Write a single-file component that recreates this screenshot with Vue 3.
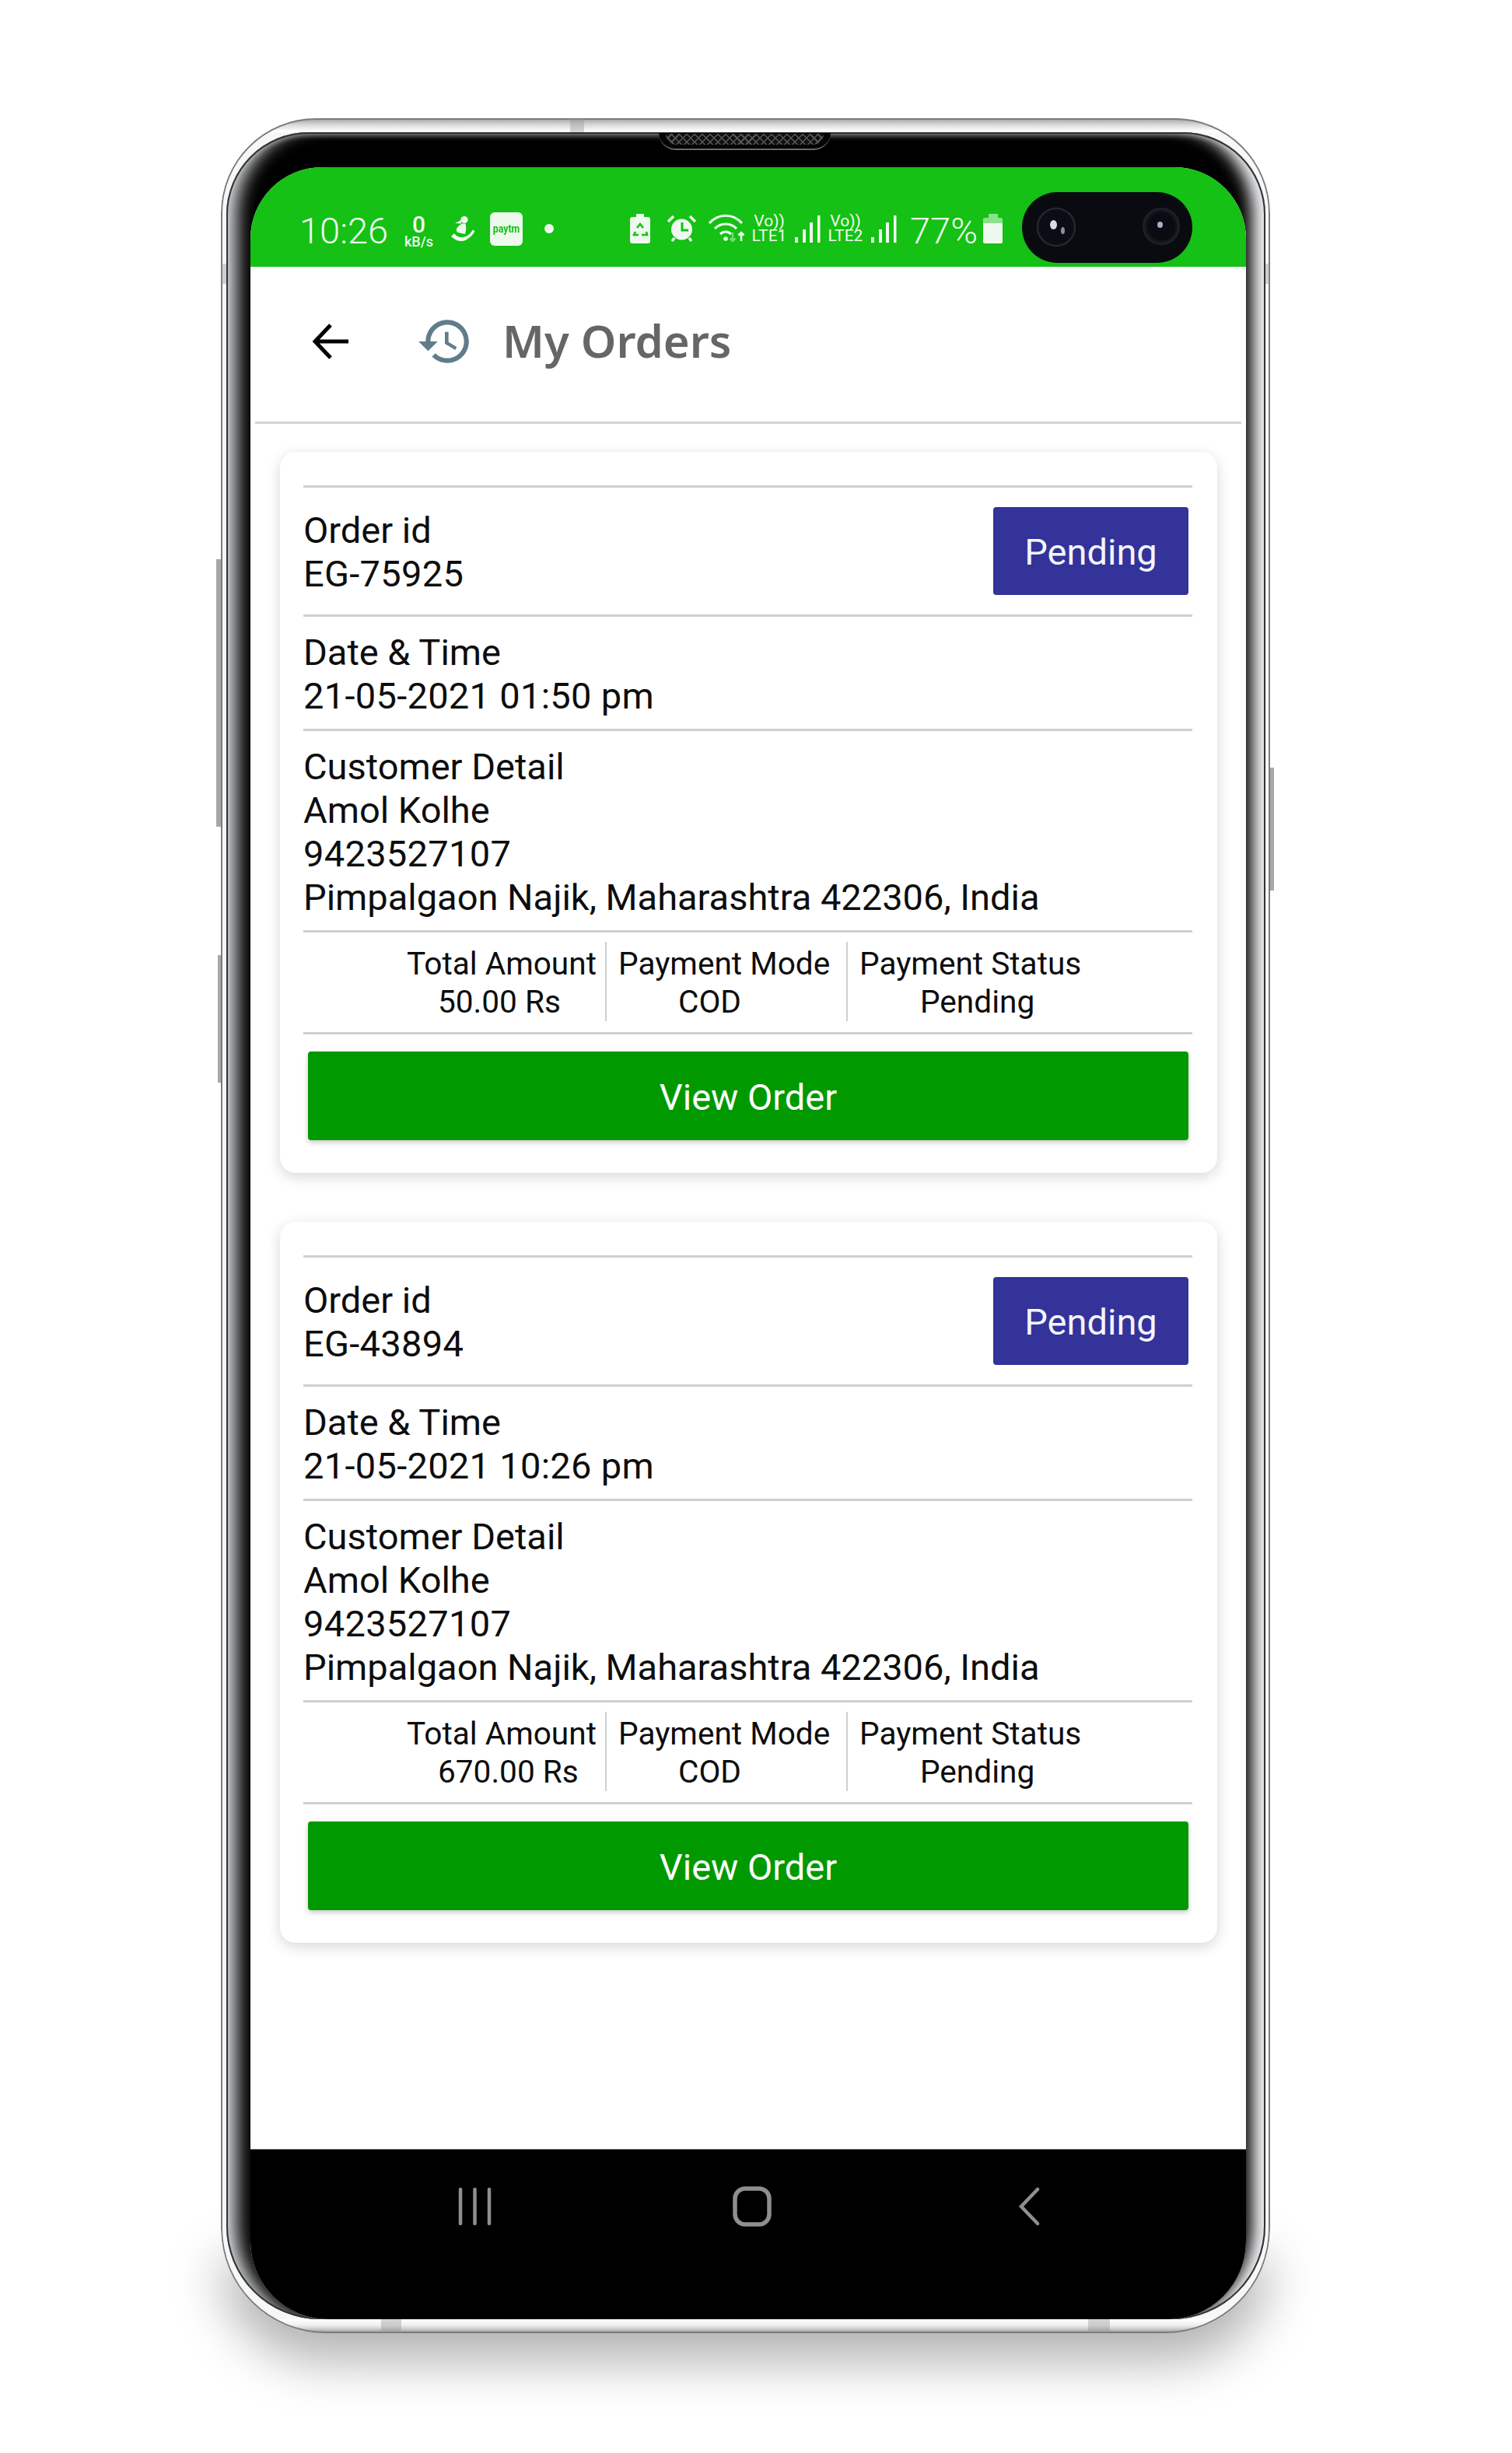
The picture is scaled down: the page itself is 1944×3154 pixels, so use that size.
<script setup>
const orders = [
  { id: 'EG-75925', date: '21-05-2021 01:50 pm', amount: '50.00 Rs' },
  { id: 'EG-43894', date: '21-05-2021 10:26 pm', amount: '670.00 Rs' }
]

const customer = {
  name: 'Amol Kolhe',
  phone: '9423527107',
  address: 'Pimpalgaon Najik, Maharashtra 422306, India'
}
</script>

<template>
  <div class="page">
    <div class="phone">
      <span class="floor-shadow"></span>
      <span class="side-key side-key--bixby"></span>
      <span class="side-key side-key--volume"></span>
      <span class="side-key side-key--power"></span>
      <span class="band band--top"></span>
      <span class="band band--left"></span>
      <span class="band band--right"></span>
      <span class="band band--bottom-a"></span>
      <span class="band band--bottom-b"></span>

      <div class="bezel">
        <div class="speaker"><span class="speaker__mesh"></span></div>

        <div class="screen">
          <div class="status">
            <span class="status__time">10:26</span>
            <span class="net">
              <span class="net__value">0</span>
              <span class="net__unit">kB/s</span>
            </span>
            <svg class="ic-figure" viewBox="0 0 31 35" fill="#eef9ee">
              <circle cx="17" cy="5.5" r="4.6" />
              <path d="M13 6 5 10l8 .6z" />
              <path d="M14 10.500C8 14 4 19 9 22l9 2c1.500-5 1.500-10 .5-13.500z" />
              <path d="M0 27c6 6 14 8 20 4 5-3 8-6 10.500-11l-3-1.500c-2 5-7 9-13 9.500-4 .5-8-1-10.500-5z" />
            </svg>
            <span class="paytm"><span class="paytm__word">paytm</span></span>
            <span class="status__dot"></span>

            <svg class="ic-battery-saver" viewBox="0 0 26 38">
              <path fill="#eef9ee" d="M8 0h10v4h5a3 3 0 0 1 3 3v28a3 3 0 0 1-3 3H3a3 3 0 0 1-3-3V7a3 3 0 0 1 3-3h5z" />
              <path fill="none" stroke="#14c114" stroke-width="2.600" d="M9 18l4-5 4 5M7 23l-2 4h6M21 23l1 4h-7" />
            </svg>
            <svg class="ic-alarm" viewBox="0 0 39 36">
              <circle cx="19.500" cy="19" r="13.500" fill="#eef9ee" />
              <path fill="none" stroke="#14c114" stroke-width="3" d="M20 10v10h8" />
              <path fill="none" stroke="#eef9ee" stroke-width="3.500" d="M2 9l7-7M37 9l-7-7M7 34l3-4M32 34l-3-4" />
            </svg>
            <svg class="ic-wifi" viewBox="0 0 50 38">
              <g fill="none" stroke="#eef9ee" stroke-width="3.200">
                <path d="M2 13c12-13 30-13 42 0" />
                <path d="M9 20c8-8 20-8 28 0" />
                <path d="M16 27c4-4 10-4 14 0" />
              </g>
              <circle cx="23" cy="33" r="2.800" fill="#eef9ee" />
              <path fill="none" stroke="#72dc72" stroke-width="2.600" d="M32 25v11M28.500 32.500 32 36l3.500-3.500" />
              <path fill="none" stroke="#eef9ee" stroke-width="2.600" d="M43 36V25M39.500 28.500 43 25l3.500 3.500" />
            </svg>

            <span class="volte volte--one"><span>Vo))</span><span>LTE1</span></span>
            <svg class="ic-bars" viewBox="0 0 33 36" fill="#eef9ee">
              <rect x="0" y="28" width="4" height="7" />
              <rect x="10" y="18" width="4" height="17" />
              <rect x="19" y="9" width="4" height="26" />
              <rect x="29" y="0" width="3.500" height="35" />
            </svg>
            <span class="volte volte--two"><span>Vo))</span><span>LTE2</span></span>
            <svg class="ic-bars ic-bars--two" viewBox="0 0 33 36" fill="#eef9ee">
              <rect x="0" y="28" width="4" height="7" />
              <rect x="10" y="18" width="4" height="17" />
              <rect x="19" y="9" width="4" height="26" />
              <rect x="29" y="0" width="3.500" height="35" />
            </svg>
            <span class="status__battery-text">77%</span>
            <span class="battery"><span class="battery__cap"></span><span class="battery__body"></span></span>
          </div>

          <div class="camera">
            <span class="lens lens--main"><i class="glint glint--a"></i><i class="glint glint--b"></i></span>
            <span class="lens lens--second"><i class="glint glint--c"></i></span>
          </div>

          <header class="title-bar">
            <svg class="ic-back" viewBox="0 0 46 46" fill="none" stroke="#000" stroke-width="5">
              <path d="M46 23H4M23 2 3 23l20 21" />
            </svg>
            <svg class="ic-history" viewBox="0 0 24 24" fill="#607d8b">
              <path d="M13 3c-4.970 0-9 4.030-9 9H1l3.890 3.890.07.140L9 12H6c0-3.870 3.130-7 7-7s7 3.130 7 7-3.130 7-7 7c-1.930 0-3.680-.790-4.940-2.060l-1.420 1.420C8.270 19.990 10.510 21 13 21c4.970 0 9-4.030 9-9s-4.030-9-9-9zm-1 5v5l4.280 2.540.720-1.210-3.500-2.080V8H12z" />
            </svg>
            <h1 class="title">My Orders</h1>
          </header>

          <main class="orders">
            <article v-for="order in orders" :key="order.id" class="card">
              <section class="row row--id">
                <div>
                  <p>Order id</p>
                  <p class="digits">{{ order.id }}</p>
                </div>
                <button type="button" class="pending">Pending</button>
              </section>
              <section class="row row--date">
                <p>Date &amp; Time</p>
                <p class="digits">{{ order.date }}</p>
              </section>
              <section class="row row--customer">
                <p>Customer Detail</p>
                <p>{{ customer.name }}</p>
                <p class="digits">{{ customer.phone }}</p>
                <p>{{ customer.address }}</p>
              </section>
              <section class="summary">
                <div class="cell cell--amount">
                  <p>Total Amount</p>
                  <p class="cell__value cell__value--amount">{{ order.amount }}</p>
                </div>
                <div class="cell cell--mode">
                  <p>Payment Mode</p>
                  <p class="cell__value cell__value--mode">COD</p>
                </div>
                <div class="cell cell--status">
                  <p>Payment Status</p>
                  <p class="cell__value cell__value--status">Pending</p>
                </div>
              </section>
              <button type="button" class="view">View Order</button>
            </article>
          </main>

          <footer class="nav">
            <svg class="ic-recents" viewBox="0 0 43 50" fill="none" stroke="#8f8f8f" stroke-width="4.500" stroke-linecap="round">
              <path d="M3 3v44M21.500 3v44M40 3v44" />
            </svg>
            <svg class="ic-home" viewBox="0 0 50 52" fill="none" stroke="#8f8f8f" stroke-width="5.500">
              <rect x="3" y="3" width="44" height="46" rx="13" />
            </svg>
            <svg class="ic-navback" viewBox="0 0 28 50" fill="none" stroke="#8f8f8f" stroke-width="4.500" stroke-linecap="round">
              <path d="M25 3 4 25l21 22" />
            </svg>
          </footer>
        </div>
      </div>
    </div>
  </div>
</template>

<style>
html,
body {
  margin: 0;
  background: #fff;
}
</style>

<style scoped>
.page {
  width: 1944px;
  height: 3154px;
  padding: 152px 0 0 284px;
  box-sizing: border-box;
  overflow: hidden;
  isolation: isolate;
  background: #fff;
  font-family: Roboto, "Liberation Sans", sans-serif;
  color: #0d0d0d;
}

p {
  margin: 0;
}

.phone {
  position: relative;
  width: 1349px;
  height: 2848px;
  box-sizing: border-box;
  padding: 18px 6px 18px 7px;
  border-radius: 122px 122px 135px 135px;
  background:
    linear-gradient(180deg, #8c8c8c 0, #b5b5b5 3px, #dcdcdc 9px, #fff 17px, #fff 18px) top / 100% 18px no-repeat,
    linear-gradient(180deg, #fff 0, #eee 8px, #c8c8c8 13px, #8d8d8d 18px) bottom / 100% 18px no-repeat,
    #f6f7f8;
  box-shadow: inset 0 0 0 2px #7c7c7c;
}

.floor-shadow {
  position: absolute;
  left: 0;
  right: 0;
  bottom: -36px;
  height: 130px;
  border-radius: 0 0 140px 140px;
  background: rgba(0, 0, 0, 0.3);
  filter: blur(32px);
  z-index: -1;
}

.side-key {
  position: absolute;
  background: #a8a8a8;
  z-index: -1;
}

.side-key--bixby {
  left: -6px;
  top: 567px;
  width: 8px;
  height: 344px;
}

.side-key--volume {
  left: -4px;
  top: 1076px;
  width: 6px;
  height: 164px;
}

.side-key--power {
  right: -5px;
  top: 835px;
  width: 7px;
  height: 158px;
}

.band {
  position: absolute;
  background: rgba(150, 150, 150, 0.4);
}

.band--top {
  left: 449px;
  top: 1px;
  width: 18px;
  height: 17px;
}

.band--left {
  left: 1px;
  top: 187px;
  width: 6px;
  height: 26px;
}

.band--right {
  right: 1px;
  top: 187px;
  width: 5px;
  height: 26px;
}

.band--bottom-a {
  left: 206px;
  bottom: 1px;
  width: 26px;
  height: 17px;
}

.band--bottom-b {
  left: 1115px;
  bottom: 1px;
  width: 28px;
  height: 17px;
}

.bezel {
  position: relative;
  height: 2812px;
  box-sizing: border-box;
  padding: 45px 25px 0 31px;
  border-radius: 106px 106px 120px 120px;
  background: #000;
  box-shadow:
    inset 0 0 0 2px #333,
    inset 27px 0 24px -15px #eceef0,
    inset -27px 0 20px -10px #f2f3f5,
    inset 0 7px 6px -3px #6a6a6a;
}

.speaker {
  position: absolute;
  left: 556px;
  top: 1px;
  width: 221px;
  height: 22px;
  box-sizing: border-box;
  padding: 1px 9px 5px;
  border-radius: 0 0 40px 40px;
  border-bottom: 2px solid #6a6a6a;
  background: #050505;
}

.speaker__mesh {
  display: block;
  height: 100%;
  border-radius: 0 0 30px 30px;
  background:
    repeating-linear-gradient(45deg, #555 0 1.500px, transparent 1.500px 7px),
    repeating-linear-gradient(-45deg, #555 0 1.500px, transparent 1.500px 7px),
    #111;
}

.screen {
  position: relative;
  width: 1280px;
  height: 2767px;
  display: flex;
  flex-direction: column;
  border-radius: 92px 92px 100px 100px;
  overflow: hidden;
  background: #fff;
}

.status {
  height: 128px;
  flex: none;
  display: flex;
  align-items: flex-start;
  padding-left: 63px;
  background: #14c114;
  color: #eef9ee;
}

.status__time,
.status__battery-text {
  margin-top: 54px;
  font-size: 47px;
  font-weight: 300;
  line-height: 55px;
  white-space: nowrap;
}

.status__time {
  width: 114px;
}

.net {
  width: 39px;
  margin: 60px 0 0 20px;
  display: flex;
  flex-direction: column;
  align-items: center;
  font-weight: 500;
}

.net__value {
  font-size: 30px;
  line-height: 28px;
}

.net__unit {
  font-size: 18px;
  line-height: 15px;
  white-space: nowrap;
}

.ic-figure {
  width: 31px;
  height: 35px;
  margin: 62px 0 0 22px;
  flex: none;
}

.paytm {
  width: 42px;
  height: 43px;
  margin: 58px 0 0 19px;
  flex: none;
  border-radius: 6px;
  background: #eef9ee;
  color: #14c114;
  font-size: 15px;
  font-weight: 700;
  line-height: 43px;
  text-align: center;
}

.paytm__word {
  display: inline-block;
  transform: scaleX(0.82);
}

.status__dot {
  width: 12px;
  height: 12px;
  margin: 73px 0 0 28px;
  flex: none;
  border-radius: 50%;
  background: #eef9ee;
}

.ic-battery-saver {
  width: 26px;
  height: 38px;
  margin: 60px 0 0 98px;
  flex: none;
}

.ic-alarm {
  width: 39px;
  height: 36px;
  margin: 61px 0 0 21px;
  flex: none;
}

.ic-wifi {
  width: 50px;
  height: 38px;
  margin: 59px 0 0 14px;
  flex: none;
}

.volte {
  width: 46px;
  flex: none;
  margin: 60px 0 0 6px;
  display: flex;
  flex-direction: column;
  align-items: center;
  font-size: 21px;
  line-height: 19px;
}

.volte--two {
  margin-left: 9px;
}

.ic-bars {
  width: 33px;
  height: 36px;
  margin: 62px 0 0 10px;
  flex: none;
}

.ic-bars--two {
  margin-left: 10px;
}

.status__battery-text {
  width: 86px;
  margin-left: 17px;
}

.battery {
  width: 25px;
  margin: 60px 0 0 8px;
  flex: none;
  display: flex;
  flex-direction: column;
  align-items: center;
}

.battery__cap {
  width: 12px;
  height: 5px;
  background: #8be08b;
}

.battery__body {
  width: 25px;
  height: 33px;
  border-radius: 2px;
  background: linear-gradient(180deg, #8be08b 0 7px, #eef9ee 7px);
}

.camera {
  position: absolute;
  left: 992px;
  top: 32px;
  width: 219px;
  height: 91px;
  border-radius: 46px;
  background: #0a0b10;
}

.lens {
  position: absolute;
  top: 20px;
  border-radius: 50%;
}

.lens--main {
  left: 19px;
  width: 50px;
  height: 50px;
  background: radial-gradient(circle, #0b0d14 0 62%, #3c3e44 72% 88%, #1a1b20 100%);
}

.lens--second {
  left: 155px;
  width: 48px;
  height: 48px;
  background: radial-gradient(circle, #0a0b12 0 50%, #24262c 72%, #14151a 100%);
}

.glint {
  position: absolute;
  border-radius: 50%;
  background: #d8dbe4;
}

.glint--a {
  left: 17px;
  top: 16px;
  width: 9px;
  height: 12px;
}

.glint--b {
  left: 31px;
  top: 25px;
  width: 5px;
  height: 9px;
  background: #8e9098;
}

.glint--c {
  left: 19px;
  top: 18px;
  width: 7px;
  height: 8px;
  background: #aab0c8;
}

.title-bar {
  height: 199px;
  flex: none;
  margin: 0 6px;
  padding-left: 74px;
  display: flex;
  align-items: center;
  border-bottom: 3px solid #d4d4d4;
}

.ic-back {
  width: 46px;
  height: 46px;
  margin-bottom: 8px;
  flex: none;
}

.ic-history {
  width: 74px;
  height: 74px;
  margin: 0 0 8px 87px;
  flex: none;
}

.title {
  margin: 0 0 10px 37px;
  color: #666;
  font-family: "Noto Sans", "Open Sans", sans-serif;
  font-size: 58px;
  font-weight: 600;
  line-height: 1.200;
  white-space: nowrap;
}

.orders {
  flex: 1;
  min-height: 0;
  padding: 36px 37px 0 38px;
  display: flex;
  flex-direction: column;
  gap: 63px;
}

.card {
  height: 927px;
  flex: none;
  box-sizing: border-box;
  padding: 43px 32px 0 30px;
  border-radius: 20px;
  background: #fff;
  box-shadow: 0 5px 18px rgba(0, 0, 0, 0.16);
  font-size: 47px;
  line-height: 56px;
}

.digits {
  letter-spacing: 0.3px;
}

.row {
  border-top: 3px solid #cfcfcf;
}

.row--id {
  height: 163px;
  display: flex;
  justify-content: space-between;
  align-items: flex-start;
}

.row--id > div {
  padding-top: 27px;
}

.row--date {
  padding: 18px 0 14px;
}

.row--customer {
  padding: 18px 0 14px;
}

.pending {
  width: 251px;
  height: 113px;
  margin: 25px 5px 0 0;
  padding: 2px 0 0;
  border: none;
  border-radius: 4px;
  background: #333399;
  color: #f4f4fa;
  font: inherit;
}

.summary {
  padding: 12px 0 14px;
  height: 102px;
  display: grid;
  grid-template-columns: 390px 310px 1fr;
  border-top: 3px solid #cfcfcf;
  border-bottom: 3px solid #cfcfcf;
  font-size: 40.600px;
  line-height: 49px;
}

.cell {
  padding-top: 4px;
  box-sizing: border-box;
  white-space: nowrap;
}

.cell--amount {
  padding-left: 133px;
  border-right: 2px solid #cfcfcf;
}

.cell--mode {
  padding-left: 15px;
  border-right: 2px solid #cfcfcf;
}

.cell--status {
  padding-left: 15px;
}

.cell__value--amount {
  padding-left: 40px;
}

.cell__value--mode {
  padding-left: 77px;
}

.cell__value--status {
  padding-left: 78px;
}

.view {
  display: block;
  width: 1132px;
  height: 114px;
  margin: 22px 0 0 6px;
  padding: 3px 0 0;
  border: none;
  border-radius: 4px;
  background: #009900;
  box-shadow: 0 3px 6px rgba(0, 0, 0, 0.22);
  color: #fff;
  font: inherit;
}

.nav {
  height: 170px;
  flex: none;
  padding: 48px 0 0 267px;
  display: flex;
  align-items: flex-start;
  border-top: 1px solid #777;
  background: #000;
}

.ic-recents {
  width: 43px;
  height: 50px;
  flex: none;
}

.ic-home {
  width: 50px;
  height: 52px;
  margin: -1px 0 0 310px;
  flex: none;
}

.ic-navback {
  width: 28px;
  height: 50px;
  margin-left: 317px;
  flex: none;
}
</style>
